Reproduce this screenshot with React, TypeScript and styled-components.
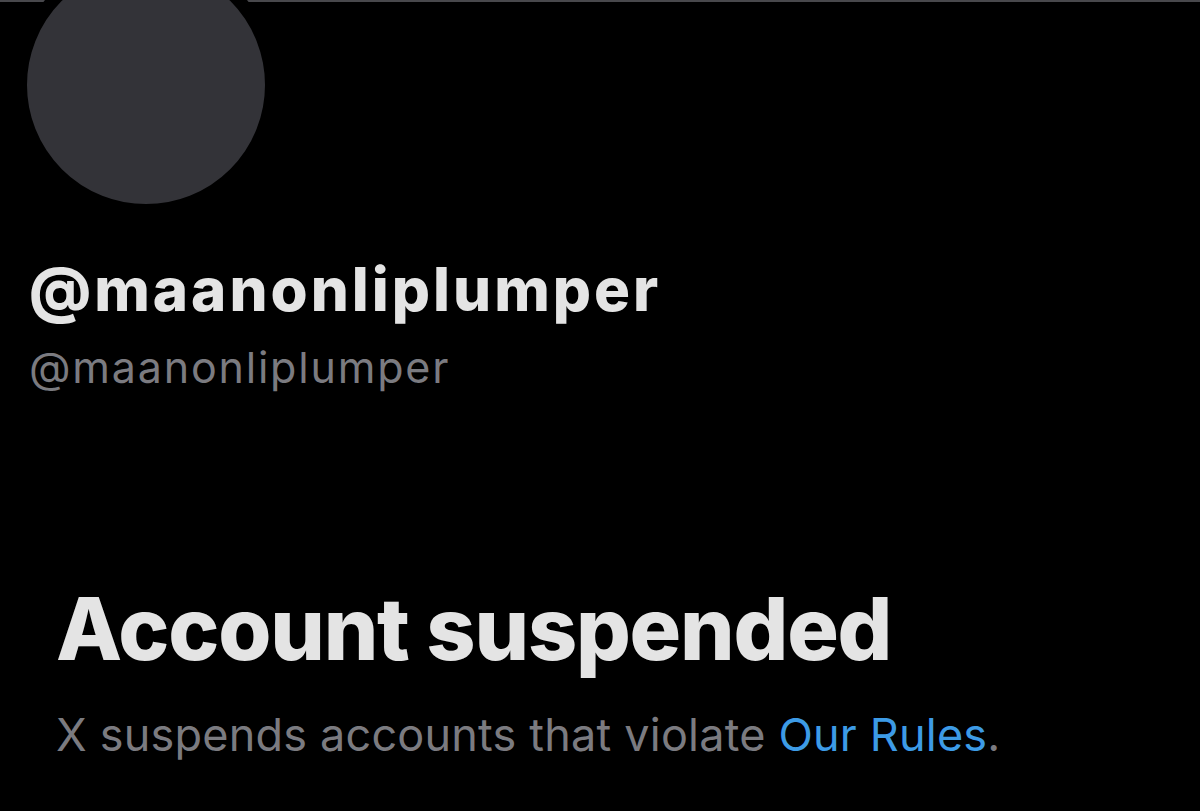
import React from 'react';
import styled, { createGlobalStyle } from 'styled-components';

const GlobalStyle = createGlobalStyle`
  html, body {
    margin: 0;
    padding: 0;
    background: #000;
  }
  body {
    font-family: Inter, "Liberation Sans", Arial, sans-serif;
    -webkit-font-smoothing: antialiased;
  }
`;

const Page = styled.div`
  width: 1200px;
  height: 811px;
  overflow: hidden;
  background: #000;
`;

const Banner = styled.div`
  height: 2px;
  background: #48484c;
`;

const Avatar = styled.div`
  position: relative;
  width: 238px;
  height: 238px;
  margin: -49px 0 0 14px;
  border: 13px solid #000;
  border-radius: 50%;
  background: #333338;
`;

const Profile = styled.div`
  padding: 37px 0 0 29px;
  display: flex;
  flex-direction: column;
`;

const DisplayName = styled.h1`
  margin: 0;
  font-size: 60px;
  font-weight: 800;
  letter-spacing: 3px;
  line-height: 70px;
  color: #e4e4e4;
`;

const Handle = styled.div`
  margin-top: 18px;
  font-size: 43px;
  font-weight: 400;
  letter-spacing: 1.8px;
  line-height: 50px;
  color: #7b7b80;
`;

const Notice = styled.div`
  padding: 187px 0 0 56px;
  display: flex;
  flex-direction: column;
`;

const Title = styled.h2`
  margin: 0;
  font-size: 86px;
  font-weight: 800;
  letter-spacing: -1.2px;
  line-height: 100px;
  color: #e4e4e4;
`;

const Message = styled.p`
  margin: 29px 0 0;
  font-size: 45px;
  font-weight: 400;
  letter-spacing: 0.2px;
  line-height: 54px;
  color: #7b7b80;
`;

const RulesLink = styled.a`
  color: #3d9be6;
  text-decoration: none;
`;

export default function App() {
  return (
    <>
      <GlobalStyle />
      <Page>
        <Banner />
        <Avatar />
        <Profile>
          <DisplayName>@maanonliplumper</DisplayName>
          <Handle>@maanonliplumper</Handle>
        </Profile>
        <Notice>
          <Title>Account suspended</Title>
          <Message>
            X suspends accounts that violate <RulesLink href="#">Our Rules</RulesLink>.
          </Message>
        </Notice>
      </Page>
    </>
  );
}
